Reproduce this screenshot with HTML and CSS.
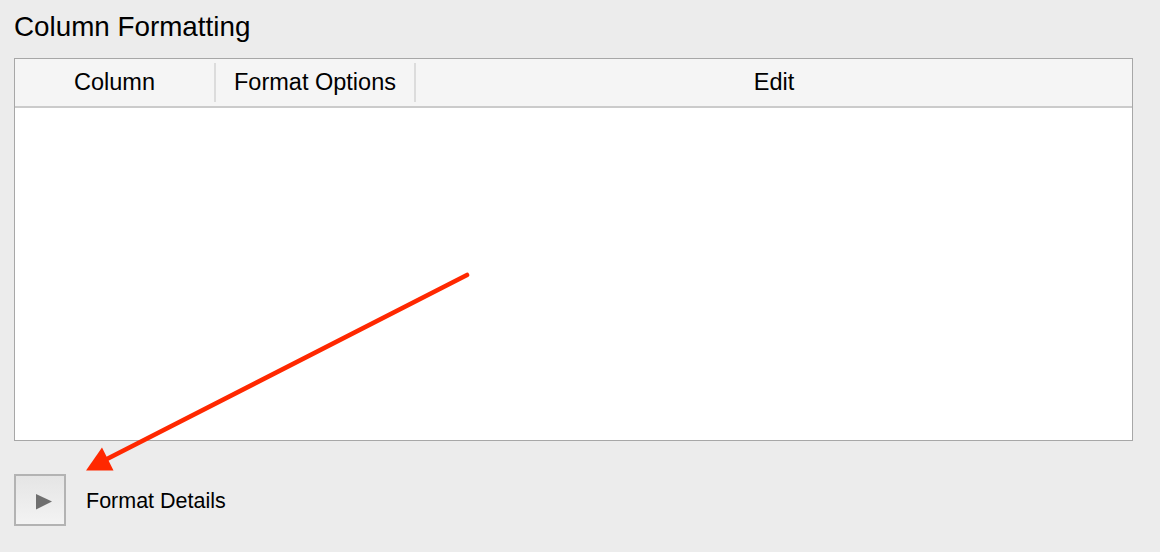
FILE: index.html
```html
<!DOCTYPE html>
<html lang="en">
<head>
<meta charset="utf-8">
<title>Column Formatting</title>
<link rel="stylesheet" href="styles.css">
</head>
<body>
<div class="page">
  <h1 class="title">Column Formatting</h1>
  <div class="table">
    <div class="thead">
      <div class="th">Column</div>
      <div class="sep"></div>
      <div class="th">Format Options</div>
      <div class="sep"></div>
      <div class="th">Edit</div>
    </div>
    <div class="tbody"></div>
  </div>
  <div class="details">
    <button class="disclosure" type="button" aria-label="Show format details">
      <svg width="16" height="16" viewBox="0 0 16 16"><polygon points="0,0 16,7.5 0,15.5" fill="#6f6f6f"/></svg>
    </button>
    <span class="details-label">Format Details</span>
  </div>
</div>
<svg class="annotation" width="1160" height="552" viewBox="0 0 1160 552">
  <line x1="467" y1="275" x2="105" y2="460" stroke="#ff2800" stroke-width="4.6" stroke-linecap="round"/>
  <polygon points="86,470.5 113.5,470.5 102,447.5" fill="#ff2800"/>
</svg>
</body>
</html>
```

FILE: styles.css
```css
html, body {
  margin: 0;
  padding: 0;
  background: #ececec;
}

body {
  width: 1160px;
  height: 552px;
  overflow: hidden;
  position: relative;
  font-family: "Liberation Sans", Arial, sans-serif;
  color: #000;
}

.page {
  padding: 11px 27px 0 14px;
  display: flex;
  flex-direction: column;
}

.title {
  margin: 0;
  font-size: 27.8px;
  font-weight: normal;
  line-height: 32px;
}

.table {
  margin-top: 15px;
  border: 1px solid #a7a7a7;
  background: #fff;
  display: flex;
  flex-direction: column;
}

.thead {
  height: 47px;
  background: #f5f5f5;
  border-bottom: 2px solid #cbcbcb;
  display: grid;
  grid-template-columns: 199px 2px 198px 2px 1fr;
}

.th {
  font-size: 23.5px;
  line-height: 47px;
  text-align: center;
  white-space: nowrap;
}

.sep {
  margin: 4px 0;
  background: #dcdcdc;
}

.tbody {
  height: 332px;
  background: #fff;
}

.details {
  margin-top: 33px;
  display: flex;
  align-items: center;
  gap: 20px;
}

.disclosure {
  width: 52px;
  height: 52px;
  box-sizing: border-box;
  margin: 0;
  padding: 18px 0 0 20px;
  border: 2px solid #b3b3b3;
  border-radius: 0;
  background: linear-gradient(#e5e5e5, #f3f3f3);
  display: flex;
  align-items: flex-start;
  justify-content: flex-start;
}

.disclosure svg {
  display: block;
}

.details-label {
  font-size: 21.5px;
  line-height: 24px;
  padding-top: 2px;
}

.annotation {
  position: absolute;
  left: 0;
  top: 0;
  pointer-events: none;
}
```
